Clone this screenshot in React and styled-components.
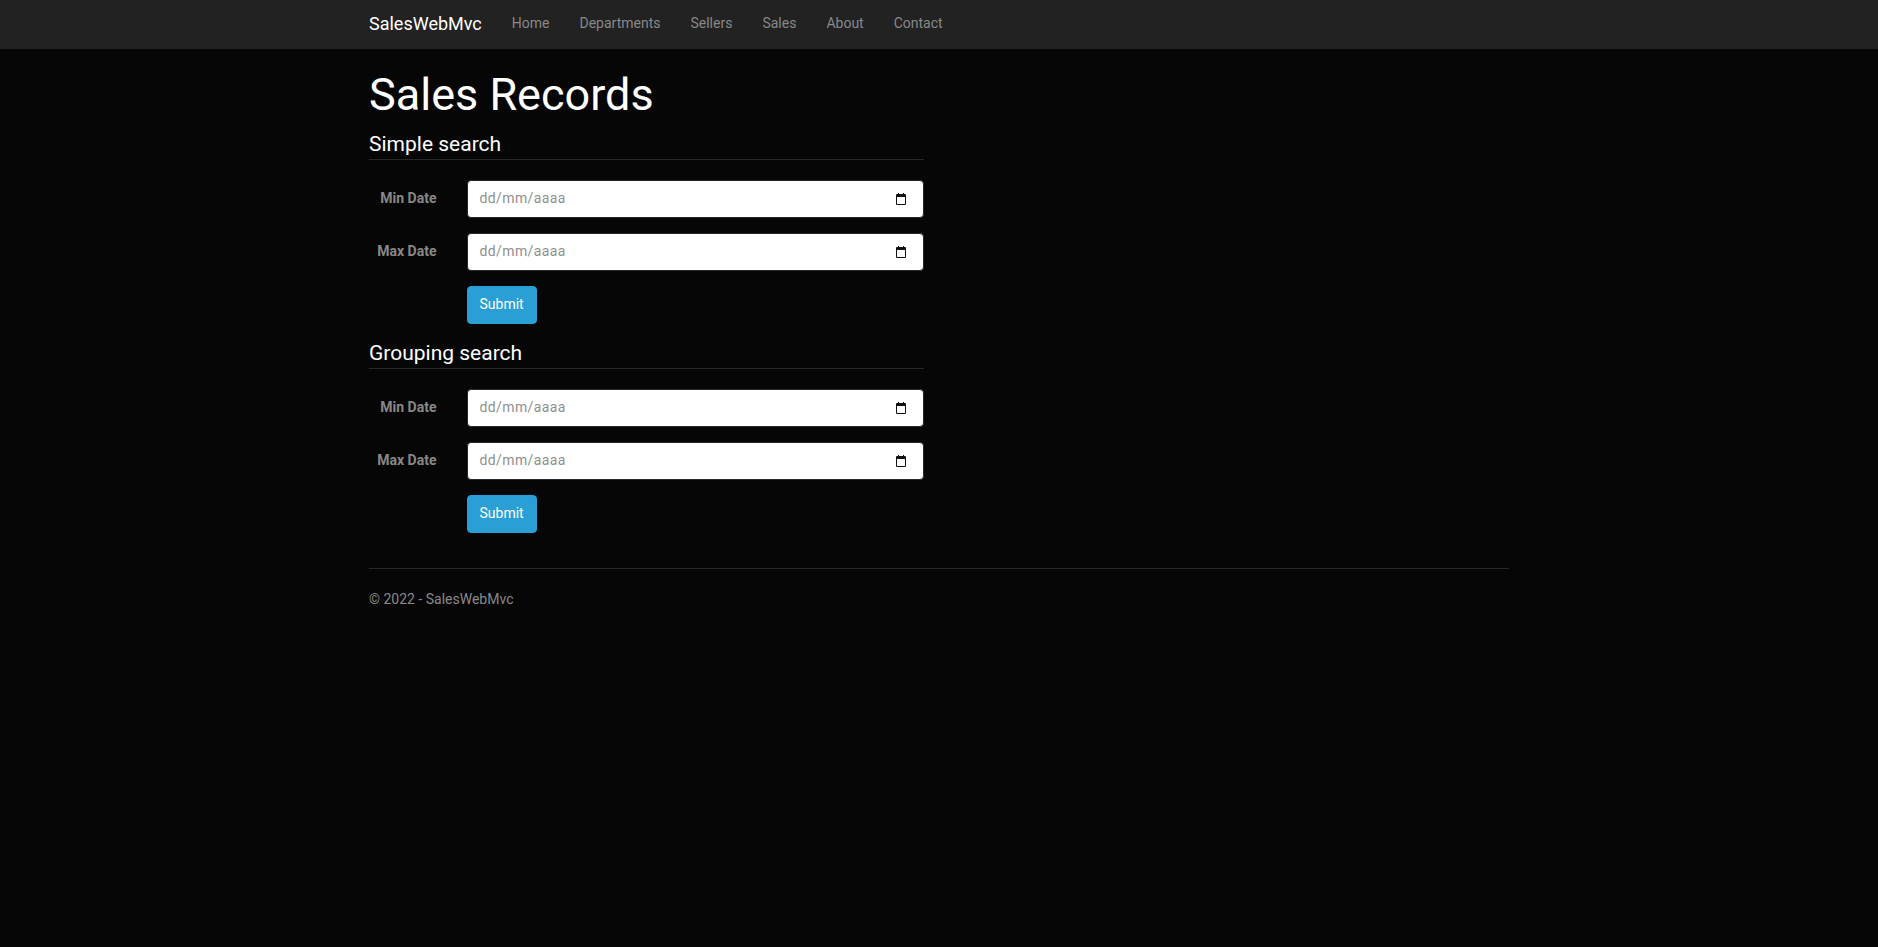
import React from "react"
import styled, { createGlobalStyle } from "styled-components"

const GlobalStyle = createGlobalStyle`
  * {
    box-sizing: border-box;
  }
  body {
    margin: 0;
    background-color: #060606;
    color: #888;
    font-family: Roboto, "Helvetica Neue", Helvetica, Arial, sans-serif;
    font-size: 14px;
    line-height: 20px;
  }
`

const Navbar = styled.nav`
  background-color: #222;
  border-bottom: 1px solid #090909;
  height: 50px;
`

const Container = styled.div`
  width: 1170px;
  margin: 0 auto;
  padding: 0 15px;
`

const NavInner = styled(Container)`
  display: flex;
  align-items: flex-start;
`

const Brand = styled.a`
  margin-left: -15px;
  padding: 14px 15px 15px;
  font-size: 18px;
  line-height: 20px;
  color: #fff;
  text-decoration: none;
`

const NavList = styled.ul`
  display: flex;
  list-style: none;
  margin: 0;
  padding: 0;
`

const NavLink = styled.a`
  display: block;
  padding: 13px 15px 15px;
  color: #888;
  text-decoration: none;
`

const Title = styled.h2`
  margin: 20px 0 10px;
  font-size: 45px;
  font-weight: 400;
  line-height: 1.1;
  color: #fff;
`

const Column = styled.div`
  width: 555px;
`

const Fieldset = styled.fieldset`
  border: 0;
  margin: 0;
  padding: 0;
  min-width: 0;
`

const Legend = styled.legend`
  display: block;
  width: 100%;
  padding: 0;
  margin-bottom: 20px;
  font-size: 21px;
  line-height: 29px;
  color: #fff;
  border-bottom: 1px solid #282828;
`

const FormGroup = styled.div`
  display: grid;
  grid-template-columns: 67.5px 1fr;
  column-gap: 30px;
  margin-bottom: 15px;
`

const Label = styled.label`
  padding-top: 8px;
  font-weight: 700;
  text-align: right;
  color: #888;
`

const DateBox = styled.div`
  display: flex;
  align-items: center;
  height: 38px;
  padding: 8px 17px 8px 12px;
  background-color: #fff;
  border: 1px solid #282828;
  border-radius: 4px;
`

const DateInput = styled.input`
  flex: 1;
  min-width: 0;
  border: 0;
  outline: 0;
  padding: 0 0 2px;
  background: transparent;
  font: inherit;
  color: #555;
  &::placeholder {
    color: #8f8f8f;
    letter-spacing: 0.4px;
  }
`

const SubmitButton = styled.button`
  grid-column: 2;
  justify-self: start;
  padding: 7px 12px 9px;
  font: inherit;
  color: #fff;
  background-color: #2a9fd6;
  border: 1px solid #2a9fd6;
  border-radius: 4px;
  cursor: pointer;
`

const Rule = styled.hr`
  margin: 20px 0;
  border: 0;
  border-top: 1px solid #282828;
`

const FooterText = styled.p`
  margin: 0 0 10px;
`

const CalendarIcon = () => (
  <svg width="10" height="12" viewBox="0 0 10 12">
    <path
      fillRule="evenodd"
      fill="#111"
      d="M2 0h1v1h4V0h1v1h1a1 1 0 0 1 1 1v9a1 1 0 0 1-1 1H1a1 1 0 0 1-1-1V2a1 1 0 0 1 1-1h1z M1 4v7h8V4z"
    />
  </svg>
)

const DateField = ({ label }) => (
  <FormGroup>
    <Label>{label}</Label>
    <DateBox>
      <DateInput type="text" placeholder="dd/mm/aaaa" />
      <CalendarIcon />
    </DateBox>
  </FormGroup>
)

const SearchForm = ({ title }) => (
  <form onSubmit={e => e.preventDefault()}>
    <Fieldset>
      <Legend>{title}</Legend>
      <DateField label="Min Date" />
      <DateField label="Max Date" />
      <FormGroup>
        <SubmitButton type="submit">Submit</SubmitButton>
      </FormGroup>
    </Fieldset>
  </form>
)

const links = ["Home", "Departments", "Sellers", "Sales", "About", "Contact"]

const App = () => (
  <>
    <GlobalStyle />
    <Navbar>
      <NavInner>
        <Brand href="#">SalesWebMvc</Brand>
        <NavList>
          {links.map(link => (
            <li key={link}>
              <NavLink href="#">{link}</NavLink>
            </li>
          ))}
        </NavList>
      </NavInner>
    </Navbar>
    <Container>
      <Title>Sales Records</Title>
      <Column>
        <SearchForm title="Simple search" />
        <SearchForm title="Grouping search" />
      </Column>
      <Rule />
      <footer>
        <FooterText>© 2022 - SalesWebMvc</FooterText>
      </footer>
    </Container>
  </>
)

export default App
